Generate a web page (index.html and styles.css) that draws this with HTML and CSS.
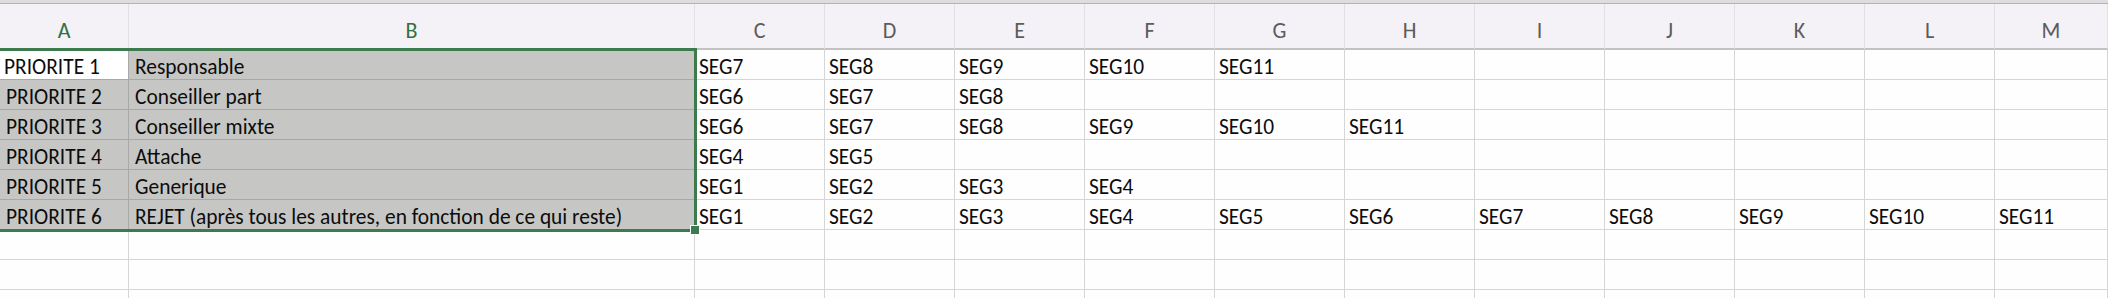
FILE: index.html
```html
<!DOCTYPE html>
<html lang="fr">
    <head>
        <title>Priorites</title>
        <meta charset="UTF-8">
        <meta name="viewport" content="width=device-width, initial-scale=1">
        <link rel="stylesheet" href="styles.css">
    </head>
    <body>
        <div id="sheet">
            <div class="topbar"></div>
            <div class="grid">
                <!-- en-tetes de colonnes -->
                <div class="hd on">A</div><div class="hd on">B</div><div class="hd">C</div><div class="hd">D</div><div class="hd">E</div><div class="hd">F</div><div class="hd">G</div><div class="hd">H</div><div class="hd">I</div><div class="hd">J</div><div class="hd">K</div><div class="hd">L</div><div class="hd">M</div>

                <div class="c active">PRIORITE 1</div><div class="c sel">Responsable</div><div class="c">SEG7</div><div class="c">SEG8</div><div class="c">SEG9</div><div class="c">SEG10</div><div class="c">SEG11</div><div class="c"></div><div class="c"></div><div class="c"></div><div class="c"></div><div class="c"></div><div class="c"></div>

                <div class="c sel">PRIORITE 2</div><div class="c sel">Conseiller part</div><div class="c">SEG6</div><div class="c">SEG7</div><div class="c">SEG8</div><div class="c"></div><div class="c"></div><div class="c"></div><div class="c"></div><div class="c"></div><div class="c"></div><div class="c"></div><div class="c"></div>

                <div class="c sel">PRIORITE 3</div><div class="c sel">Conseiller mixte</div><div class="c">SEG6</div><div class="c">SEG7</div><div class="c">SEG8</div><div class="c">SEG9</div><div class="c">SEG10</div><div class="c">SEG11</div><div class="c"></div><div class="c"></div><div class="c"></div><div class="c"></div><div class="c"></div>

                <div class="c sel">PRIORITE 4</div><div class="c sel">Attache</div><div class="c">SEG4</div><div class="c">SEG5</div><div class="c"></div><div class="c"></div><div class="c"></div><div class="c"></div><div class="c"></div><div class="c"></div><div class="c"></div><div class="c"></div><div class="c"></div>

                <div class="c sel">PRIORITE 5</div><div class="c sel">Generique</div><div class="c">SEG1</div><div class="c">SEG2</div><div class="c">SEG3</div><div class="c">SEG4</div><div class="c"></div><div class="c"></div><div class="c"></div><div class="c"></div><div class="c"></div><div class="c"></div><div class="c"></div>

                <div class="c sel">PRIORITE 6</div><div class="c sel">REJET (après tous les autres, en fonction de ce qui reste)</div><div class="c">SEG1</div><div class="c">SEG2</div><div class="c">SEG3</div><div class="c">SEG4</div><div class="c">SEG5</div><div class="c">SEG6</div><div class="c">SEG7</div><div class="c">SEG8</div><div class="c">SEG9</div><div class="c">SEG10</div><div class="c">SEG11</div>

                <div class="c"></div><div class="c"></div><div class="c"></div><div class="c"></div><div class="c"></div><div class="c"></div><div class="c"></div><div class="c"></div><div class="c"></div><div class="c"></div><div class="c"></div><div class="c"></div><div class="c"></div>
                <div class="c"></div><div class="c"></div><div class="c"></div><div class="c"></div><div class="c"></div><div class="c"></div><div class="c"></div><div class="c"></div><div class="c"></div><div class="c"></div><div class="c"></div><div class="c"></div><div class="c"></div>
                <div class="c"></div><div class="c"></div><div class="c"></div><div class="c"></div><div class="c"></div><div class="c"></div><div class="c"></div><div class="c"></div><div class="c"></div><div class="c"></div><div class="c"></div><div class="c"></div><div class="c"></div>
            </div>
            <!-- plage A1:B6 selectionnee -->
            <div class="selection"><span class="handle"></span></div>
        </div>
    </body>
</html>
```

FILE: styles.css
```css
body{margin: 0;padding: 0}

html,body{height: 100%;overflow: hidden;background: #fdfefd;
font: 21.4px Carlito, Lato, "Liberation Sans", sans-serif;color: #0c0c0c}

#sheet{position: relative;width: 100%}

.topbar{height: 3px;background: #dedede;border-bottom: 1px solid #b3b3b3}

.grid{display: grid;grid-template-columns: 129px 566px repeat(10, 130px) 1fr;
grid-template-rows: 46px;grid-auto-rows: 30px}

.hd{box-sizing: border-box;background: #f4f2f6;border-right: 1px solid #e2e0e5;
border-bottom: 2px solid #c2c2c2;display: flex;align-items: center;justify-content: center;
font-size: 22px;font-weight: 300;color: #5c5c5c;padding-top: 8px}
.hd.on{color: #2f7142;font-weight: 400}

.c{box-sizing: border-box;border-right: 1px solid #d6d6d6;border-bottom: 1px solid #d6d6d6;
display: flex;align-items: flex-end;padding: 0 0 0 4px;line-height: 24px;
white-space: nowrap;overflow: hidden}
.c.sel{background: #c6c7c5;border-color: #a8a9a7;padding-left: 6px}
.c.active{background: #fff;border-color: #a8a9a7}

.selection{position: absolute;left: -3px;top: 48px;width: 700px;height: 184px;
box-sizing: border-box;border: 3px solid #3d7a4e;pointer-events: none}
.selection .handle{position: absolute;right: -6px;bottom: -6px;width: 8px;height: 8px;
background: #3d7a4e;border: 1px solid #fdfefd}
```
